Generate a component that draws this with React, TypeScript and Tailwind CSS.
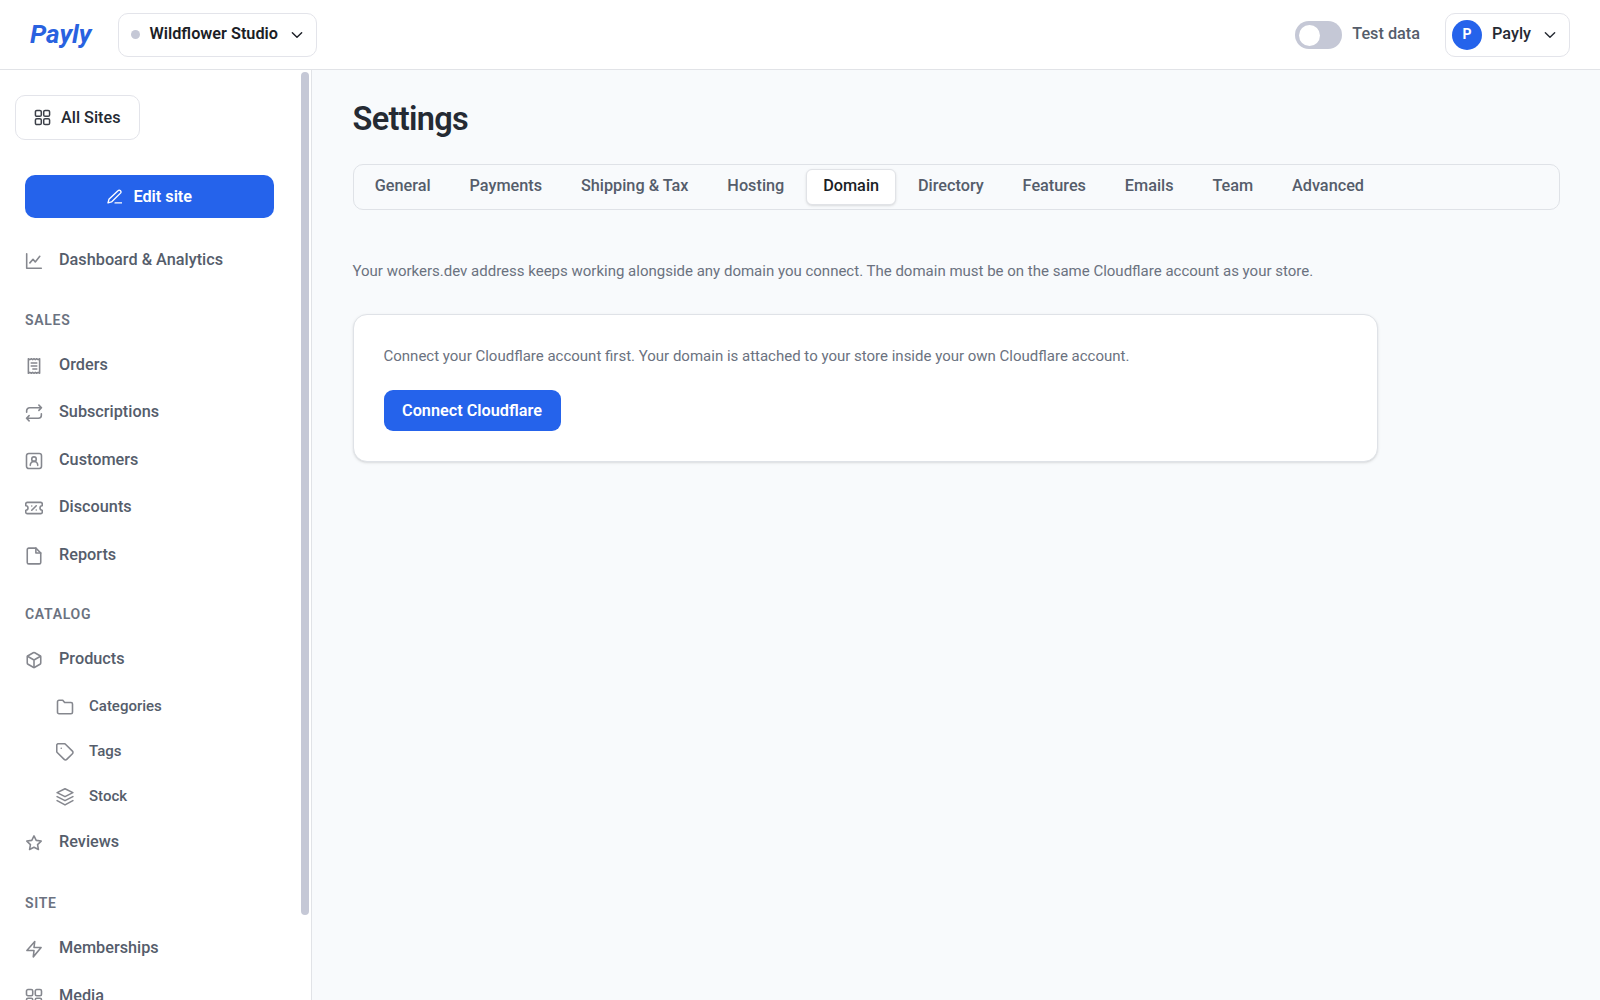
import type { ReactNode } from 'react';

type IconName =
  | 'chart' | 'receipt' | 'repeat' | 'contact' | 'ticket' | 'file' | 'box'
  | 'folder' | 'tag' | 'layers' | 'star' | 'bolt' | 'grid' | 'pencil' | 'chevron';

const icons: Record<IconName, ReactNode> = {
  chart: <path d="M2.25 2.25v19.5h19.5M6.5 14.5l4.2-4.8 3 3.6 6-7.6" />,
  receipt: (
    <>
      <path d="M4.5 2.3l2 1.2 2-1.2 1.8 1.2L12 2.3l1.7 1.2 1.8-1.2 2 1.2 2-1.2v19.4l-2-1.2-2 1.2-1.8-1.2-1.7 1.2-1.7-1.2-1.8 1.2-2-1.2-2 1.2z" />
      <path d="M8.3 8h7.4M8.3 12h7.4M10.5 16h5.2" />
    </>
  ),
  repeat: <path d="m18.5 1.5 3.5 3.5-3.500 3.500M2.200 11V9a4 4 0 0 1 4-4H22M5.500 22.500 2 19l3.500-3.500M21.800 13v2a4 4 0 0 1-4 4H2" />,
  contact: (
    <>
      <rect x="2" y="2" width="20" height="20" rx="3" />
      <circle cx="12" cy="9.5" r="3" />
      <path d="M7 17.8c0-3 2.2-5.3 5-5.3s5 2.3 5 5.3" />
    </>
  ),
  ticket: (
    <>
      <path d="M1 9V6.5a2 2 0 0 1 2-2h18a2 2 0 0 1 2 2V9a3 3 0 0 0 0 6v2.5a2 2 0 0 1-2 2H3a2 2 0 0 1-2-2V15a3 3 0 0 0 0-6z" />
      <path d="M9 15l6-6M9 9.3h.01M15 14.7h.01" />
    </>
  ),
  file: (
    <>
      <path d="M14.5 1.5H5a2 2 0 0 0-2 2v17a2 2 0 0 0 2 2h14a2 2 0 0 0 2-2V8z" />
      <path d="M14.5 1.5V8H21" />
    </>
  ),
  box: (
    <>
      <path d="M21 16V8a2 2 0 0 0-1-1.73l-7-4a2 2 0 0 0-2 0l-7 4A2 2 0 0 0 3 8v8a2 2 0 0 0 1 1.73l7 4a2 2 0 0 0 2 0l7-4A2 2 0 0 0 21 16z" />
      <path d="M3.3 7 12 12l8.7-5M12 22V12" />
    </>
  ),
  folder: <path d="M22 19a2 2 0 0 1-2 2H4a2 2 0 0 1-2-2V5a2 2 0 0 1 2-2h5l2.5 3H20a2 2 0 0 1 2 2z" />,
  tag: (
    <>
      <path d="M12.6 1.6A2 2 0 0 0 11.2 1H3a2 2 0 0 0-2 2v8.2a2 2 0 0 0 .6 1.4l9.3 9.3a2.4 2.4 0 0 0 3.4 0l7.6-7.6a2.4 2.4 0 0 0 0-3.4z" />
      <path d="M7 7h.01" />
    </>
  ),
  layers: (
    <path d="M12 1 1.5 6.2 12 11.5l10.5-5.3zM1.5 11.5 12 16.8l10.5-5.3M1.5 16.8 12 22.5l10.5-5.7" />
  ),
  star: <path d="m12 2.5 2.95 6 6.6.95-4.8 4.65 1.15 6.6L12 17.6l-5.9 3.1 1.15-6.6-4.8-4.65 6.6-.95z" />,
  bolt: <path d="M13 2 2.5 14H12l-1 8.5L21.5 10H12z" />,
  grid: (
    <>
      <rect x="2" y="2" width="8.3" height="8.3" rx="2" />
      <rect x="13.7" y="2" width="8.3" height="8.3" rx="2" />
      <rect x="2" y="13.7" width="8.3" height="8.3" rx="2" />
      <rect x="13.7" y="13.7" width="8.3" height="8.3" rx="2" />
    </>
  ),
  pencil: <path d="M12.5 21.5h10M17 2.6a2.7 2.7 0 0 1 3.9 3.8L7 20l-5.5 1.5L3 16z" />,
  chevron: <path d="m5 8.5 7 7 7-7" />,
};

function Icon({ name, className = '' }: { name: IconName; className?: string }) {
  return (
    <svg viewBox="0 0 24 24" fill="none" stroke="currentColor" strokeWidth={2.1}
      strokeLinecap="round" strokeLinejoin="round" className={`shrink-0 ${className}`}>
      {icons[name]}
    </svg>
  );
}

function NavItem({ icon, label, sub }: { icon: IconName; label: string; sub?: boolean }) {
  return (
    <a className={`flex items-center text-[#555d6b] font-medium
      ${sub ? 'h-[45px] pl-[55.5px] text-[15px]' : 'h-[47.5px] pl-[25px] text-[16.25px]'}`}>
      <Icon name={icon} className="size-[18px] text-[#85878e]" />
      <span className={sub ? 'ml-[15.5px]' : 'ml-4 pb-[1.5px]'}>{label}</span>
    </a>
  );
}

function SectionLabel({ children }: { children: ReactNode }) {
  return (
    <div className="pl-[25px] h-5 text-sm leading-5 font-semibold tracking-[0.05em] text-[#6b7280]">
      {children}
    </div>
  );
}

const tabs = ['General', 'Payments', 'Shipping & Tax', 'Hosting', 'Domain', 'Directory', 'Features', 'Emails', 'Team', 'Advanced'];

function Header() {
  return (
    <header className="h-[70px] shrink-0 flex items-center bg-white border-b border-[#e1e3e7] pl-[30px] pr-[30px]">
      <span className="w-[87.5px] text-[26px] leading-none font-bold italic text-[#2962e0] pb-0.5">Payly</span>
      <button type="button" className="mt-px h-11 w-[199.5px] flex items-center border border-[#e3e4ea] rounded-[10px] pl-[12.5px] text-[16.25px] font-semibold text-[#1b1e26]">
        <span className="size-[9px] mb-px rounded-full bg-[#c5c8d6]" />
        <span className="ml-[9.5px] pb-px">Wildflower Studio</span>
        <Icon name="chevron" className="size-4 ml-auto mr-[11px]" />
      </button>

      <div className="ml-auto mt-px flex items-center">
        <span className="w-[47px] h-7 rounded-full bg-[#c5c8d6] p-[3.5px]">
          <span className="block size-[21px] rounded-full bg-white" />
        </span>
        <span className="ml-[10px] pb-px text-[16.25px] font-medium text-[#555d6b]">Test data</span>
        <button type="button" className="ml-[25px] h-11 w-[125px] flex items-center border border-[#e3e4ea] rounded-[10px] pl-1.5 text-[16.25px] font-medium text-[#252a33]">
          <span className="size-[30px] rounded-full bg-[#2563eb] text-white text-sm font-bold flex items-center justify-center pb-[2px]">P</span>
          <span className="ml-[10px] pb-px">Payly</span>
          <Icon name="chevron" className="size-4 ml-auto mr-[11px]" />
        </button>
      </div>
    </header>
  );
}

function Sidebar() {
  return (
    <aside className="w-[312px] shrink-0 flex bg-white border-r border-[#e1e3e7] overflow-hidden">
      <div className="flex-1">
        <button type="button" className="mt-[25px] ml-[15px] h-[45px] w-[125px] flex items-center border border-[#e3e4ea] rounded-[10px] pl-[18px] text-[16.25px] font-medium text-[#252a33]">
          <Icon name="grid" className="size-[17px] text-[#3c4049]" />
          <span className="ml-[10px] pt-[2px]">All Sites</span>
        </button>
        <button type="button" className="mt-[35px] ml-[25px] h-[42.5px] w-[249px] flex items-center justify-center gap-[11px] rounded-[10px] bg-[#2563eb] text-white text-[16.25px] font-semibold">
          <Icon name="pencil" className="size-[15.5px]" />
          <span className="pt-[2px]">Edit site</span>
        </button>

        <nav className="mt-5">
          <NavItem icon="chart" label="Dashboard & Analytics" />
          <div className="mt-[25px]" />
          <SectionLabel>SALES</SectionLabel>
          <div className="mt-3">
            <NavItem icon="receipt" label="Orders" />
            <NavItem icon="repeat" label="Subscriptions" />
            <NavItem icon="contact" label="Customers" />
            <NavItem icon="ticket" label="Discounts" />
            <NavItem icon="file" label="Reports" />
          </div>
          <div className="mt-6" />
          <SectionLabel>CATALOG</SectionLabel>
          <div className="mt-[13px]">
            <NavItem icon="box" label="Products" />
            <NavItem icon="folder" label="Categories" sub />
            <NavItem icon="tag" label="Tags" sub />
            <NavItem icon="layers" label="Stock" sub />
            <NavItem icon="star" label="Reviews" />
          </div>
          <div className="mt-[26px]" />
          <SectionLabel>SITE</SectionLabel>
          <div className="mt-[13px]">
            <NavItem icon="bolt" label="Memberships" />
            <NavItem icon="grid" label="Media" />
          </div>
        </nav>
      </div>
      {/* scrollbar thumb */}
      <div className="mt-[2px] mr-[2px] w-2 h-[843px] rounded-full bg-[#c5c8d6]" />
    </aside>
  );
}

export default function App() {
  return (
    <div className="h-screen flex flex-col overflow-hidden bg-[#f8fafc] font-[Roboto,sans-serif]">
      <Header />
      <div className="flex-1 min-h-0 flex">
        <Sidebar />
        <main className="flex-1 min-w-0 pl-[40.5px] pr-10 pt-[29px]">
          <h1 className="text-[32.5px] leading-10 font-semibold tracking-[-0.021em] text-[#252a33]">Settings</h1>

          <div className="mt-[25px] h-[46px] flex items-center gap-[4.25px] p-1 border border-[#dfe2e7] rounded-[10px]">
            {tabs.map(t => (
              <button
                key={t}
                type="button"
                className={`h-9 px-[16.3px] pb-[3px] border rounded-md text-[16.25px] leading-6 font-medium
                  ${t === 'Domain'
                    ? 'bg-white border-[#e1e3e7] text-[#1b1e26] shadow-sm'
                    : 'border-transparent text-[#555d6b]'}`}
              >
                {t}
              </button>
            ))}
          </div>

          <p className="mt-[50px] text-[15px] leading-[22px] text-[#6b7280]">
            Your workers.dev address keeps working alongside any domain you connect. The domain must be on the same Cloudflare account as your store.
          </p>

          <section className="mt-8 w-[1025px] h-[148px] bg-white border border-[#dfe2e7] rounded-[14px] px-[30px] pt-[30px] shadow-sm">
            <p className="text-[15px] leading-[22px] text-[#6b7280]">
              Connect your Cloudflare account first. Your domain is attached to your store inside your own Cloudflare account.
            </p>
            <button type="button" className="mt-[23px] h-[41px] w-[177px] rounded-[9px] bg-[#2563eb] text-white text-[16.25px] leading-6 font-semibold">
              Connect Cloudflare
            </button>
          </section>
        </main>
      </div>
    </div>
  );
}
